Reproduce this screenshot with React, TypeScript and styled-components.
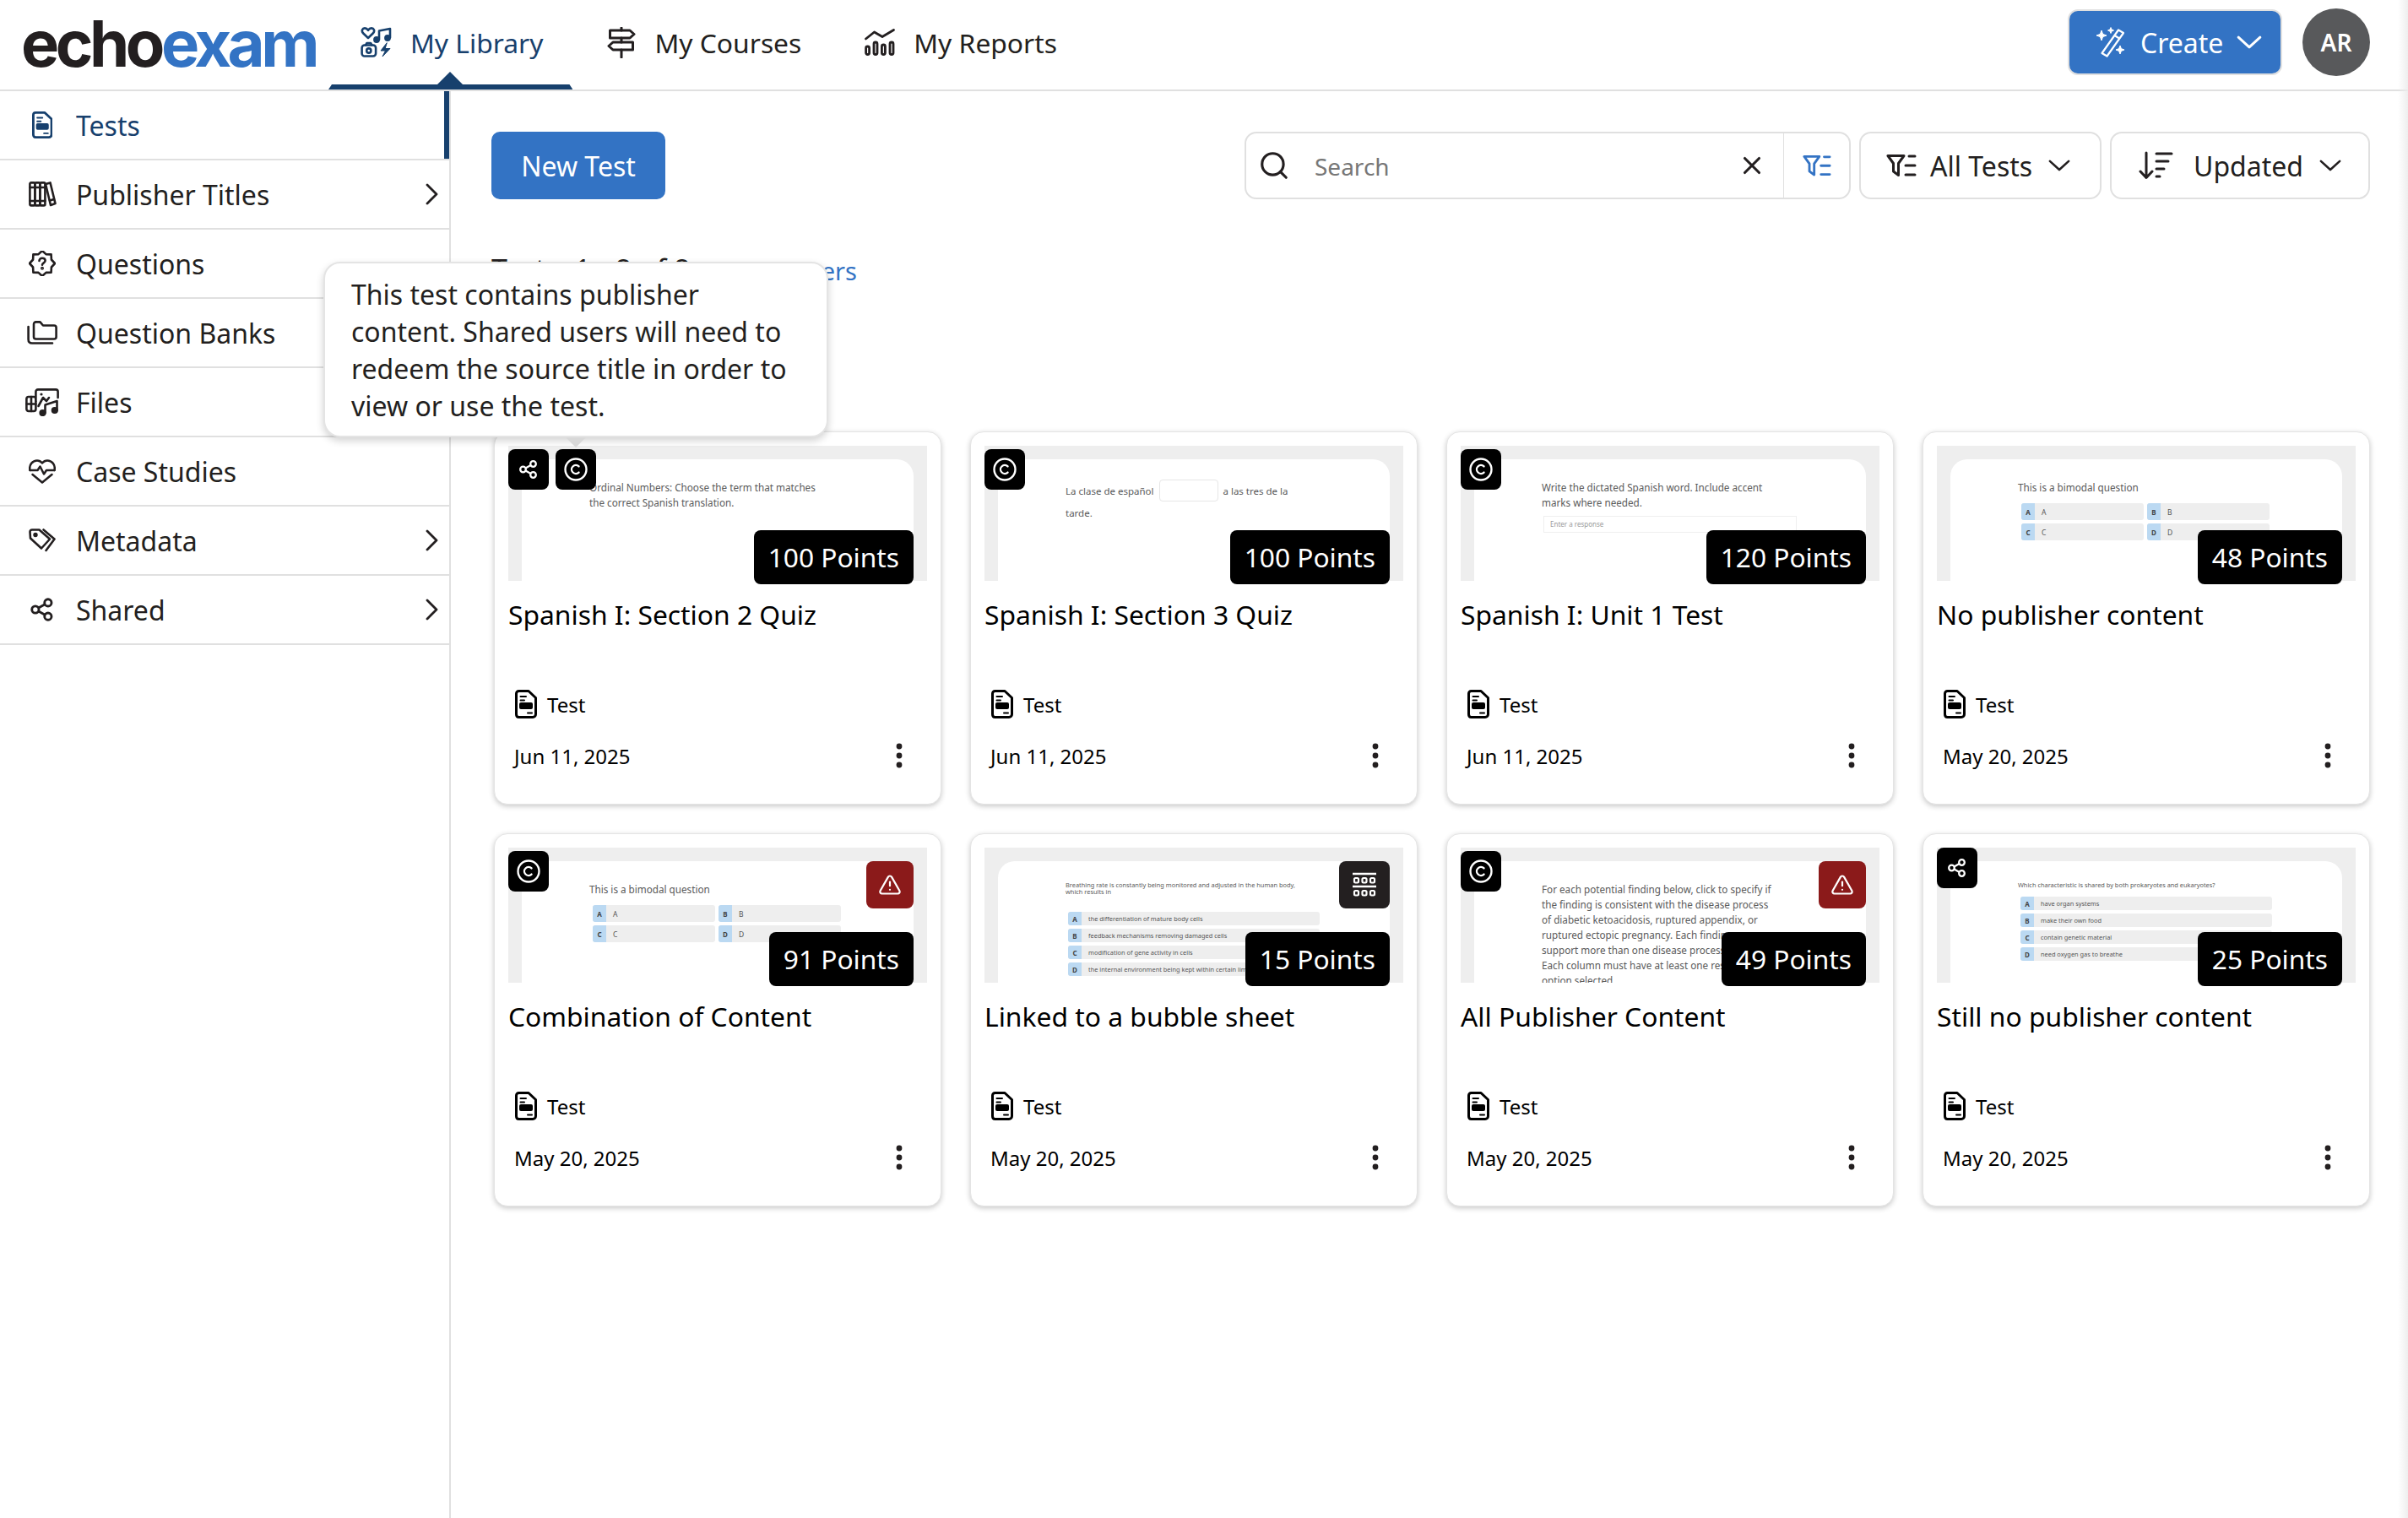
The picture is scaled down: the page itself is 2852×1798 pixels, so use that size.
import React from "react";
import styled, { createGlobalStyle } from "styled-components";
import { Copyright, Search, TriangleAlert, X } from "lucide-react";

const NAVY = "#17406d";
const BLUE = "#3373c4";
const INK = "#231f20";
const LINE = "#e0e0e0";

const GlobalStyle = createGlobalStyle`
  html, body {
    margin: 0;
    padding: 0;
    background: #fff;
  }
  * {
    box-sizing: border-box;
  }
  body {
    font-family: "Noto Sans", "Open Sans", sans-serif;
    color: ${INK};
  }
`;

const LibraryIcon = () => (
  <svg width="37" height="36" viewBox="0 0 37 36" fill="none" stroke="currentColor" strokeWidth="2.6" strokeLinejoin="round" strokeLinecap="round">
    <path d="M9 13 L2.8 7 C0.8 4.4 2.2 1.4 5 1.4 C6.6 1.4 8 2.3 9 3.8 C10 2.3 11.4 1.4 13 1.4 C15.8 1.4 17.2 4.4 15.2 7 Z" />
    <path d="M22 15 V4.5 L35 2 V12.5" />
    <circle cx="19" cy="15" r="2.6" fill="currentColor" />
    <circle cx="32" cy="13" r="2.6" fill="currentColor" />
    <rect x="1.6" y="21.5" width="16.5" height="13" rx="3.2" />
    <path d="M6 21.5 L7.5 19 H12 L13.5 21.5" />
    <circle cx="9.8" cy="28" r="2.6" />
    <path d="M31 19 L24 28 H29.5 L26 35 L35 25.5 H29.5 Z" fill="currentColor" strokeWidth="1" />
  </svg>
);

const SignpostIcon = () => (
  <svg width="34" height="37" viewBox="0 0 34 37" fill="none" stroke="currentColor" strokeWidth="3" strokeLinejoin="round" strokeLinecap="round">
    <path d="M17 1 V4 M17 13 V18 M17 27 V36" />
    <path d="M3.5 4 H27 L32 8.5 L27 13 H3.5 Z" />
    <path d="M7 18 H30.5 V27 H7 L2 22.5 Z" />
  </svg>
);

const ReportsIcon = () => (
  <svg width="36" height="32" viewBox="0 0 36 32" fill="none" stroke="currentColor" strokeWidth="2.8" strokeLinejoin="round" strokeLinecap="round">
    <path d="M1.5 12 L11.5 4 L21 9.5 L34.5 1.5" />
    <rect x="1.6" y="21" width="4" height="9.5" rx="2" />
    <rect x="11" y="16" width="4" height="14.5" rx="2" />
    <rect x="20.4" y="19" width="4" height="11.5" rx="2" />
    <rect x="30" y="16" width="4" height="14.5" rx="2" />
  </svg>
);

const WandIcon = () => (
  <svg width="38" height="38" viewBox="0 0 38 38" fill="none" stroke="currentColor" strokeWidth="2.2" strokeLinejoin="round">
    <path d="M28 4.5 L34 8 L14.5 35.5 L8.5 32 Z" />
    <path d="M23.5 11 L29.5 14.8" />
    <path d="M8 5 L9.6 9.4 L14 11 L9.6 12.6 L8 17 L6.4 12.6 L2 11 L6.4 9.4 Z" fill="currentColor" strokeWidth="1" />
    <path d="M19 1.5 L20 4 L22.5 5 L20 6 L19 8.5 L18 6 L15.5 5 L18 4 Z" fill="currentColor" strokeWidth="1" />
    <path d="M30 23 L31.4 26.6 L35 28 L31.4 29.4 L30 33 L28.6 29.4 L25 28 L28.6 26.6 Z" fill="currentColor" strokeWidth="1" />
  </svg>
);

const ChevronDownIcon = ({ width = 26 }: { width?: number }) => (
  <svg width={width} height={(width * 15) / 28} viewBox="0 0 28 15" fill="none" stroke="currentColor" strokeWidth="2.8" strokeLinecap="round" strokeLinejoin="round">
    <path d="M2 2 L14 13 L26 2" />
  </svg>
);

const ChevronRightIcon = () => (
  <svg width="15" height="26" viewBox="0 0 15 26" fill="none" stroke="currentColor" strokeWidth="2.8" strokeLinecap="round" strokeLinejoin="round">
    <path d="M2 2 L13 13 L2 24" />
  </svg>
);

const FilterListIcon = ({ size = 36 }: { size?: number }) => (
  <svg width={size} height={(size * 28) / 36} viewBox="0 0 36 28" fill="none" stroke="currentColor" strokeWidth="3" strokeLinecap="round" strokeLinejoin="round">
    <path d="M2 2.5 H21 L14.5 11.5 V25.5 L8.5 21 V11.5 Z" />
    <path d="M27 3 H34 M23 14 H34 M23 25 H34" />
  </svg>
);

const SortIcon = () => (
  <svg width="41" height="34" viewBox="0 0 41 34" fill="none" stroke="currentColor" strokeWidth="3" strokeLinecap="round" strokeLinejoin="round">
    <path d="M9 2 V31 M2 24 L9 31.5 L16 24" />
    <path d="M21 3 H39 M21 12 H35 M21 21 H30 M21 30 H25" />
  </svg>
);

const ShareIcon = ({ size = 24 }: { size?: number }) => (
  <svg width={size} height={size} viewBox="0 0 24 24" fill="none" stroke="currentColor" strokeWidth="2.3">
    <circle cx="5.5" cy="12" r="3.3" />
    <circle cx="17.5" cy="5.5" r="3.3" />
    <circle cx="17.5" cy="18.5" r="3.3" />
    <path d="M8.5 10.4 L14.6 7 M8.5 13.6 L14.6 17" />
  </svg>
);

const DocIcon = ({ size = 34 }: { size?: number }) => (
  <svg width={(size * 26) / 34} height={size} viewBox="0 0 26 34" fill="none" stroke="currentColor" strokeWidth="3" strokeLinejoin="round" strokeLinecap="round">
    <path d="M4.5 1.5 H16 L24.5 9.5 V29 C24.5 31 23 32.5 21 32.5 H4.5 C2.6 32.5 1.5 31 1.5 29 V4.5 C1.5 2.8 2.8 1.5 4.5 1.5 Z" />
    <path d="M6.5 8 H13 M6.5 12.5 H11" strokeWidth="2" />
    <rect x="5" y="15" width="16" height="8" rx="2" fill="currentColor" stroke="none" />
    <path d="M15 27.5 H20" strokeWidth="2" />
  </svg>
);

const BooksIcon = () => (
  <svg width="33" height="30" viewBox="0 0 33 30" fill="none" stroke="currentColor" strokeWidth="2.6" strokeLinejoin="round" strokeLinecap="round">
    <rect x="1.4" y="1.4" width="6" height="27" rx="1.4" />
    <rect x="7.4" y="1.4" width="6" height="27" rx="1.4" />
    <rect x="13.4" y="1.4" width="6" height="27" rx="1.4" />
    <path d="M1.4 7 H19.4 M1.4 23 H19.4" />
    <path d="M20 3 L25.5 1.4 L31.5 26 L26 28 Z" />
    <path d="M25 22.5 L30 21" />
  </svg>
);

const badgePoints = Array.from({ length: 16 }, (_, i) => {
  const a = (i * Math.PI) / 8 - Math.PI / 2;
  const r = i % 2 === 0 ? 15 : 11.8;
  return `${(16 + r * Math.cos(a)).toFixed(1)},${(15 + r * Math.sin(a)).toFixed(1)}`;
}).join(" ");

const QuestionIcon = () => (
  <svg width="32" height="30" viewBox="0 0 32 30" fill="none" stroke="currentColor" strokeWidth="2.6" strokeLinejoin="round" strokeLinecap="round">
    <polygon points={badgePoints} />
    <path d="M12.5 12 C12.5 9.9 14 8.8 16 8.8 C18 8.8 19.6 10 19.6 11.8 C19.6 14.3 16 14.3 16 16.7" />
    <circle cx="16" cy="20.8" r="0.7" fill="currentColor" />
  </svg>
);

const FoldersIcon = () => (
  <svg width="36" height="28" viewBox="0 0 36 28" fill="none" stroke="currentColor" strokeWidth="2.6" strokeLinejoin="round" strokeLinecap="round">
    <path d="M8 4 C8 2.4 9 1.4 10.5 1.4 H15.5 L19 5.5 H32 C33.5 5.5 34.6 6.6 34.6 8 V19 C34.6 20.5 33.5 21.5 32 21.5 H10.5 C9 21.5 8 20.5 8 19 Z" />
    <path d="M1.6 7 V22 C1.6 24.8 3.2 26.5 6 26.5 H30" />
  </svg>
);

const FilesIcon = () => (
  <svg width="40" height="33" viewBox="0 0 40 33" fill="none" stroke="currentColor" strokeWidth="2.6" strokeLinejoin="round" strokeLinecap="round">
    <rect x="1.4" y="10" width="11" height="17" rx="2.5" />
    <path d="M7 10 V27 M1.4 18.5 H12.4" />
    <path d="M12.4 15 V4 C12.4 2.5 13.4 1.4 15 1.4 H36 C37.6 1.4 38.6 2.5 38.6 4 V11" fill="#fff" />
    <path d="M15.5 21 L21 11 L25 15 M25 15 L28 11" />
    <circle cx="19" cy="7" r="1.6" fill="currentColor" stroke="none" />
    <path d="M23.5 29 V19.5 L37.5 15 V26" />
    <circle cx="20.5" cy="29" r="2.8" fill="currentColor" />
    <circle cx="34.8" cy="26" r="2.8" fill="currentColor" />
  </svg>
);

const HeartPulseIcon = () => (
  <svg width="32" height="29" viewBox="0 0 32 29" fill="none" stroke="currentColor" strokeWidth="2.5" strokeLinejoin="round" strokeLinecap="round">
    <path d="M4.5 18 L16 27.5 L27.5 18" />
    <path d="M1.5 13 C0 6 5 1.5 10 1.5 C12.5 1.5 14.5 2.7 16 4.5 C17.5 2.7 19.5 1.5 22 1.5 C27 1.5 32 6 30.5 13" />
    <path d="M1.5 13 H10.5 L13.5 8.5 L18 17.5 L21 13 H30.5" />
  </svg>
);

const TagsIcon = () => (
  <svg width="33" height="28" viewBox="0 0 33 28" fill="none" stroke="currentColor" strokeWidth="2.6" strokeLinejoin="round" strokeLinecap="round">
    <path d="M1.5 4 C1.5 2.5 2.5 1.5 4 1.5 H12.5 L25 12.5 L15 23.5 L2 11.5 Z" />
    <path d="M17.5 1.5 L30.5 12.5 L20.5 26" />
    <circle cx="8" cy="7.5" r="1.4" fill="currentColor" />
  </svg>
);

const BubbleSheetIcon = () => (
  <svg width="30" height="30" viewBox="0 0 30 30" fill="none">
    <path d="M1 2 H29 M1 17 H29" stroke="#fff" strokeWidth="2.4" />
    <g fill="none" stroke="#fff" strokeWidth="2.2">
      <rect x="3" y="7" width="5" height="5.5" rx="1.4" />
      <rect x="12.5" y="7" width="5" height="5.5" rx="1.4" />
      <rect x="22" y="7" width="5" height="5.5" rx="1.4" />
      <rect x="3" y="22" width="5" height="5.5" rx="1.4" />
      <rect x="12.5" y="22" width="5" height="5.5" rx="1.4" />
      <rect x="22" y="22" width="5" height="5.5" rx="1.4" />
    </g>
  </svg>
);

const KebabIcon = () => (
  <svg width="8" height="30" viewBox="0 0 8 30" fill="currentColor">
    <circle cx="4" cy="4" r="3.4" />
    <circle cx="4" cy="15" r="3.4" />
    <circle cx="4" cy="26" r="3.4" />
  </svg>
);

type Option = { letter: string; label: string };

const abcd: Option[] = ["A", "B", "C", "D"].map((l) => ({ letter: l, label: l }));

const Bimodal = () => (
  <PreviewBody>
    <PreviewText>This is a bimodal question</PreviewText>
    <OptionGrid $columns={2} $rowHeight={20} $gap={4}>
      {abcd.map((o) => (
        <OptionRow key={o.letter}>
          <OptionTag>{o.letter}</OptionTag>
          {o.label}
        </OptionRow>
      ))}
    </OptionGrid>
  </PreviewBody>
);

const choices = (labels: string[]) => labels.map((label, i) => ({ letter: "ABCD"[i], label }));

const ListPreview = ({ prompt, items, mt }: { prompt: React.ReactNode; items: string[]; mt: number }) => (
  <PreviewBody>
    <TinyText>{prompt}</TinyText>
    <OptionGrid $columns={1} $rowHeight={16} $gap={4} $mt={mt} $wide>
      {choices(items).map((o) => (
        <OptionRow key={o.letter} $tiny>
          <OptionTag>{o.letter}</OptionTag>
          {o.label}
        </OptionRow>
      ))}
    </OptionGrid>
  </PreviewBody>
);

const OrdinalPreview = () => (
  <PreviewBody>
    <PreviewText>
      Ordinal Numbers: Choose the term that matches
      <br />
      the correct Spanish translation.
    </PreviewText>
  </PreviewBody>
);

const ClozePreview = () => (
  <PreviewBody>
    <ClozeLine>
      La clase de español
      <ClozeInput />a las tres de la
    </ClozeLine>
    <ClozeLine>tarde.</ClozeLine>
  </PreviewBody>
);

const DictationPreview = () => (
  <PreviewBody>
    <PreviewText>
      Write the dictated Spanish word. Include accent
      <br />
      marks where needed.
    </PreviewText>
    <ResponseInput>Enter a response</ResponseInput>
  </PreviewBody>
);

const BubblePreview = () => (
  <ListPreview
    mt={20}
    prompt={
      <>
        Breathing rate is constantly being monitored and adjusted in the human body,
        <br />
        which results in
      </>
    }
    items={[
      "the differentiation of mature body cells",
      "feedback mechanisms removing damaged cells",
      "modification of gene activity in cells",
      "the internal environment being kept within certain limits",
    ]}
  />
);

const FindingsPreview = () => (
  <PreviewBody>
    <PreviewText>
      For each potential finding below, click to specify if
      <br />
      the finding is consistent with the disease process
      <br />
      of diabetic ketoacidosis, ruptured appendix, or
      <br />
      ruptured ectopic pregnancy. Each finding may
      <br />
      support more than one disease process.
      <br />
      Each column must have at least one response
      <br />
      option selected.
    </PreviewText>
  </PreviewBody>
);

const CellsPreview = () => (
  <ListPreview
    mt={10}
    prompt="Which characteristic is shared by both prokaryotes and eukaryotes?"
    items={["have organ systems", "make their own food", "contain genetic material", "need oxygen gas to breathe"]}
  />
);

type CardData = {
  title: string;
  points: number;
  date: string;
  shared?: boolean;
  copyright?: boolean;
  flush?: boolean;
  warning?: boolean;
  bubble?: boolean;
  Preview: () => React.ReactElement;
};

const cards: CardData[] = [
  { title: "Spanish I: Section 2 Quiz", points: 100, date: "Jun 11, 2025", shared: true, copyright: true, Preview: OrdinalPreview },
  { title: "Spanish I: Section 3 Quiz", points: 100, date: "Jun 11, 2025", copyright: true, Preview: ClozePreview },
  { title: "Spanish I: Unit 1 Test", points: 120, date: "Jun 11, 2025", copyright: true, Preview: DictationPreview },
  { title: "No publisher content", points: 48, date: "May 20, 2025", Preview: Bimodal },
  { title: "Combination of Content", points: 91, date: "May 20, 2025", copyright: true, warning: true, Preview: Bimodal },
  { title: "Linked to a bubble sheet", points: 15, date: "May 20, 2025", bubble: true, Preview: BubblePreview },
  { title: "All Publisher Content", points: 49, date: "May 20, 2025", copyright: true, warning: true, Preview: FindingsPreview },
  { title: "Still no publisher content", points: 25, date: "May 20, 2025", shared: true, flush: true, Preview: CellsPreview },
];

const sideItems = [
  { label: "Tests", icon: <DocIcon size={32} />, active: true },
  { label: "Publisher Titles", icon: <BooksIcon />, arrow: true },
  { label: "Questions", icon: <QuestionIcon /> },
  { label: "Question Banks", icon: <FoldersIcon /> },
  { label: "Files", icon: <FilesIcon /> },
  { label: "Case Studies", icon: <HeartPulseIcon /> },
  { label: "Metadata", icon: <TagsIcon />, arrow: true },
  { label: "Shared", icon: <ShareIcon size={30} />, arrow: true },
];

const TestCard = ({ card }: { card: CardData }) => (
  <Card>
    <Thumb>
      <Panel>
        <card.Preview />
      </Panel>
      {(card.shared || card.copyright) && (
        <IconBadges $flush={card.flush}>
          {card.shared && (
            <IconBadge>
              <ShareIcon />
            </IconBadge>
          )}
          {card.copyright && (
            <IconBadge>
              <Copyright size={30} strokeWidth={1.9} />
            </IconBadge>
          )}
        </IconBadges>
      )}
      {card.warning && (
        <StatusBadge $kind="warning">
          <TriangleAlert size={28} strokeWidth={1.9} />
        </StatusBadge>
      )}
      {card.bubble && (
        <StatusBadge $kind="bubble">
          <BubbleSheetIcon />
        </StatusBadge>
      )}
      <PointsBadge>{card.points} Points</PointsBadge>
    </Thumb>
    <CardTitle>{card.title}</CardTitle>
    <MetaRow>
      <DocIcon size={34} />
      <span>Test</span>
    </MetaRow>
    <DateRow>
      <span>{card.date}</span>
      <MenuButton>
        <KebabIcon />
      </MenuButton>
    </DateRow>
  </Card>
);

export default function App() {
  return (
    <Page>
      <GlobalStyle />
      <TopBar>
        <Logo>
          echo<LogoAccent>exam</LogoAccent>
        </Logo>
        <Tab $active>
          <LibraryIcon />
          My Library
        </Tab>
        <Tab>
          <SignpostIcon />
          My Courses
        </Tab>
        <Tab>
          <ReportsIcon />
          My Reports
        </Tab>
        <TopActions>
          <CreateButton>
            <WandIcon />
            Create
            <ChevronDownIcon width={30} />
          </CreateButton>
          <Avatar>AR</Avatar>
        </TopActions>
      </TopBar>
      <Body>
        <Sidebar>
          {sideItems.map((item) => (
            <SideRow key={item.label} $active={item.active}>
              <SideIcon>{item.icon}</SideIcon>
              {item.label}
              {item.arrow && (
                <SideArrow>
                  <ChevronRightIcon />
                </SideArrow>
              )}
            </SideRow>
          ))}
        </Sidebar>
        <Main>
          <Toolbar>
            <PrimaryButton>New Test</PrimaryButton>
            <SearchBox>
              <Search size={38} strokeWidth={2} />
              <SearchInput>Search</SearchInput>
              <X size={34} strokeWidth={2.2} />
              <SearchFilter>
                <FilterListIcon size={34} />
              </SearchFilter>
            </SearchBox>
            <SelectButton>
              <FilterListIcon />
              All Tests
              <ChevronDownIcon />
            </SelectButton>
            <SelectButton $wide>
              <SortIcon />
              Updated
              <ChevronDownIcon />
            </SelectButton>
          </Toolbar>
          <Summary>
            Tests: 1 - 8 of 8
            <ClearLink>Clear Filters</ClearLink>
          </Summary>
          <CardGrid>
            {cards.map((c) => (
              <TestCard key={c.title} card={c} />
            ))}
          </CardGrid>
        </Main>
      </Body>
      <Tooltip>
        This test contains publisher
        <br />
        content. Shared users will need to
        <br />
        redeem the source title in order to
        <br />
        view or use the test.
      </Tooltip>
    </Page>
  );
}

const Page = styled.div`
  position: relative;
  display: flex;
  flex-direction: column;
  width: 2852px;
  height: 1798px;
  overflow: hidden;
  background: #fff;

  &::after {
    content: "";
    position: absolute;
    top: 0;
    right: 0;
    bottom: 0;
    width: 12px;
    background: linear-gradient(to right, rgba(240, 240, 240, 0), rgba(236, 236, 236, 0.9));
    pointer-events: none;
  }
`;

const TopBar = styled.header`
  display: flex;
  align-items: stretch;
  height: 108px;
  padding: 0 45px 0 25px;
  border-bottom: 2px solid ${LINE};
`;

const Logo = styled.div`
  align-self: center;
  width: 364px;
  margin-top: -4px;
  font-family: Inter, "Liberation Sans", sans-serif;
  font-size: 76px;
  font-weight: 700;
  letter-spacing: -4.5px;
  line-height: 1;
  color: ${INK};
`;

const LogoAccent = styled.span`
  color: ${BLUE};
`;

const Tab = styled.div<{ $active?: boolean }>`
  position: relative;
  display: flex;
  align-items: center;
  gap: 22px;
  height: 106px;
  padding: 0 ${(p) => (p.$active ? 35 : 34)}px 6px ${(p) => (p.$active ? 38 : 41)}px;
  font-size: 31.8px;
  color: ${(p) => (p.$active ? NAVY : INK)};

  ${(p) =>
    p.$active &&
    `
    &::before {
      content: "";
      position: absolute;
      left: 0;
      right: 0;
      bottom: 0;
      height: 6px;
      background: ${NAVY};
      clip-path: polygon(4px 0, calc(100% - 4px) 0, 100% 100%, 0 100%);
    }
    &::after {
      content: "";
      position: absolute;
      left: 129px;
      bottom: 6px;
      border-left: 15px solid transparent;
      border-right: 15px solid transparent;
      border-bottom: 15px solid ${NAVY};
    }
  `}
`;

const TopActions = styled.div`
  display: flex;
  align-items: center;
  gap: 24px;
  margin-left: auto;
  padding-bottom: 6px;
`;

const CreateButton = styled.button`
  display: flex;
  align-items: center;
  gap: 16px;
  width: 254px;
  height: 78px;
  padding: 0 0 0 30px;
  border: 2px solid ${LINE};
  border-radius: 12px;
  background: ${BLUE};
  color: #fff;
  font: inherit;
  font-size: 32px;
`;

const Avatar = styled.div`
  display: flex;
  align-items: center;
  justify-content: center;
  width: 80px;
  height: 80px;
  border-radius: 50%;
  background: #58595b;
  color: #fff;
  font-size: 28px;
  font-weight: 600;
`;

const Body = styled.div`
  display: flex;
  flex: 1;
  min-height: 0;
`;

const Sidebar = styled.nav`
  flex: none;
  width: 534px;
  border-right: 2px solid ${LINE};
`;

const SideRow = styled.div<{ $active?: boolean }>`
  position: relative;
  display: flex;
  align-items: center;
  height: 82px;
  padding-left: 90px;
  border-bottom: 2px solid ${LINE};
  font-size: 32px;
  color: ${(p) => (p.$active ? NAVY : INK)};

  ${(p) =>
    p.$active &&
    `
    &::after {
      content: "";
      position: absolute;
      top: 0;
      right: 0;
      bottom: 0;
      width: 6px;
      background: ${NAVY};
    }
  `}
`;

const SideIcon = styled.span`
  position: absolute;
  left: 28px;
  top: 0;
  bottom: 0;
  display: flex;
  align-items: center;
  justify-content: center;
  width: 44px;
`;

const SideArrow = styled.span`
  position: absolute;
  right: 13px;
  top: 0;
  bottom: 0;
  display: flex;
  align-items: center;
`;

const Main = styled.main`
  flex: 1;
  min-width: 0;
  padding: 48px 45px 0 48px;
`;

const Toolbar = styled.div`
  display: flex;
  align-items: center;
  gap: 10px;
  height: 80px;
`;

const PrimaryButton = styled.button`
  width: 206px;
  height: 80px;
  margin-right: auto;
  border: none;
  border-radius: 10px;
  background: ${BLUE};
  color: #fff;
  font: inherit;
  font-size: 32px;
`;

const SearchBox = styled.div`
  display: flex;
  align-items: center;
  width: 718px;
  height: 80px;
  padding-left: 14px;
  border: 2px solid ${LINE};
  border-radius: 14px;
`;

const SearchInput = styled.div`
  flex: 1;
  margin: 2px 0 0 29px;
  font-size: 28px;
  color: #777;
`;

const SearchFilter = styled.div`
  display: flex;
  align-items: center;
  justify-content: center;
  width: 78px;
  height: 100%;
  margin-left: 20px;
  border-left: 1px solid ${LINE};
  color: ${BLUE};
`;

const SelectButton = styled.div<{ $wide?: boolean }>`
  display: flex;
  align-items: center;
  gap: 19px;
  width: ${(p) => (p.$wide ? "308px" : "287px")};
  height: 80px;
  padding-left: ${(p) => (p.$wide ? 32 : 30)}px;
  border: 2px solid ${LINE};
  border-radius: 14px;
  font-size: 32px;

  svg:first-child {
    margin-right: ${(p) => (p.$wide ? 5 : -3)}px;
  }
`;

const Summary = styled.div`
  display: flex;
  justify-content: space-between;
  align-items: baseline;
  width: 433px;
  height: 40px;
  margin-top: 60px;
  font-size: 34px;
  white-space: nowrap;
  color: ${INK};
`;

const ClearLink = styled.span`
  font-size: 29px;
  color: ${BLUE};
`;

const CardGrid = styled.div`
  display: grid;
  grid-template-columns: repeat(4, 530px);
  column-gap: 34px;
  row-gap: 34px;
  margin: 175px 0 0 3px;
`;

const Card = styled.article`
  height: 442px;
  padding: 16px 16px 0;
  border: 1px solid #e4e4e4;
  border-radius: 16px;
  background: #fff;
  box-shadow: 0 2px 6px rgba(0, 0, 0, 0.22);
`;

const Thumb = styled.div`
  position: relative;
  height: 160px;
  padding: 16px 16px 0;
  background: #eee;
`;

const Panel = styled.div`
  height: 144px;
  overflow: hidden;
  border-radius: 20px 20px 0 0;
  background: #fff;
`;

const PreviewBody = styled.div`
  padding: 24px 0 0 80px;
`;

const PreviewText = styled.div`
  font-size: 11.7px;
  line-height: 18px;
  white-space: nowrap;
  color: #5a5a5a;
`;

const TinyText = styled.div`
  font-size: 7.4px;
  line-height: 8px;
  white-space: nowrap;
  color: #5a5a5a;
`;

const ClozeLine = styled.div`
  display: flex;
  align-items: center;
  gap: 4px;
  height: 26px;
  font-size: 11.5px;
  white-space: pre;
  color: #5a5a5a;
`;

const ClozeInput = styled.span`
  width: 70px;
  height: 26px;
  margin: 0 2px;
  border: 1px solid #e6e6e6;
  border-radius: 4px;
`;

const ResponseInput = styled.div`
  width: 300px;
  height: 20px;
  margin: 7px 0 0 2px;
  padding-left: 7px;
  border: 1px solid #efefef;
  font-size: 8px;
  line-height: 18px;
  color: #999;
`;

const OptionGrid = styled.div<{ $columns: number; $rowHeight: number; $gap: number; $mt?: number; $wide?: boolean }>`
  display: grid;
  grid-template-columns: repeat(${(p) => p.$columns}, ${(p) => (p.$wide ? "298px" : "145px")});
  grid-auto-rows: ${(p) => p.$rowHeight}px;
  gap: ${(p) => p.$gap}px;
  margin: ${(p) => p.$mt ?? 10}px 0 0 ${(p) => (p.$wide ? 3 : 4)}px;
`;

const OptionRow = styled.div<{ $tiny?: boolean }>`
  display: flex;
  align-items: center;
  gap: 8px;
  overflow: hidden;
  border-radius: 3px;
  background: #eee;
  font-size: ${(p) => (p.$tiny ? "7.4px" : "8.5px")};
  white-space: nowrap;
  color: #555;
`;

const OptionTag = styled.span`
  flex: none;
  width: 16px;
  align-self: stretch;
  display: flex;
  align-items: center;
  justify-content: center;
  background: #bbd9f2;
  font-size: 8px;
  font-weight: 700;
  color: #444;
`;

const IconBadges = styled.div<{ $flush?: boolean }>`
  position: absolute;
  top: ${(p) => (p.$flush ? 0 : 4)}px;
  left: 0;
  display: flex;
  gap: 8px;
`;

const IconBadge = styled.div`
  display: flex;
  align-items: center;
  justify-content: center;
  width: 48px;
  height: 48px;
  border-radius: 8px;
  background: #000;
  color: #fff;
`;

const StatusBadge = styled.div<{ $kind: "warning" | "bubble" }>`
  position: absolute;
  top: 16px;
  right: 16px;
  display: flex;
  align-items: center;
  justify-content: center;
  width: ${(p) => (p.$kind === "warning" ? 56 : 60)}px;
  height: 56px;
  border-radius: 8px;
  background: ${(p) => (p.$kind === "warning" ? "#8b1a1a" : INK)};
  color: #fff;
`;

const PointsBadge = styled.div`
  position: absolute;
  right: 16px;
  bottom: -4px;
  display: flex;
  align-items: center;
  height: 64px;
  padding: 0 17px 2px 17px;
  border-radius: 8px;
  background: #000;
  color: #fff;
  font-size: 31.7px;
`;

const CardTitle = styled.h3`
  height: 88px;
  margin: 19px 0 0;
  font-size: 31.8px;
  font-weight: 400;
  line-height: 42px;
  color: #000;
`;

const MetaRow = styled.div`
  display: flex;
  align-items: center;
  gap: 12px;
  height: 40px;
  margin-top: 19px;
  padding-left: 8px;
  font-size: 24px;
  color: #000;
`;

const DateRow = styled.div`
  display: flex;
  align-items: center;
  justify-content: space-between;
  height: 40px;
  margin-top: 21px;
  padding: 0 29px 0 7px;
  font-size: 24px;
  color: #000;
`;

const MenuButton = styled.span`
  display: flex;
  color: ${INK};
`;

const Tooltip = styled.div`
  position: absolute;
  top: 310px;
  left: 383px;
  width: 598px;
  height: 208px;
  padding: 15px 0 0 31px;
  border: 2px solid #e4e4e4;
  border-radius: 20px;
  background: #fff;
  box-shadow: 0 4px 10px rgba(0, 0, 0, 0.18);
  font-size: 32px;
  line-height: 44px;
  color: ${INK};

  &::after {
    content: "";
    position: absolute;
    top: 206px;
    left: 285px;
    border-left: 12px solid transparent;
    border-right: 12px solid transparent;
    border-top: 12px solid #d8d8d8;
  }
`;
